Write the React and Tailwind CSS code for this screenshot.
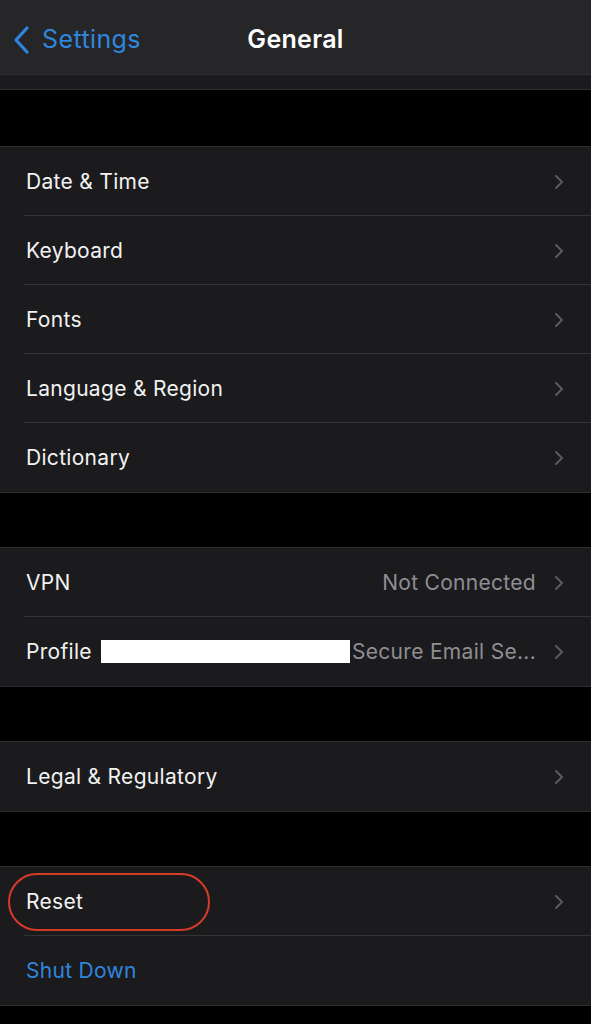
const FONT = { fontFamily: 'Inter, "Liberation Sans", sans-serif' };

const Chevron = () => (
  <svg width="10" height="16" viewBox="0 0 10 16" className="shrink-0">
    <path d="M2 2l6 6-6 6" fill="none" stroke="#5b5b5f" strokeWidth="2" strokeLinecap="round" strokeLinejoin="round" />
  </svg>
);

const Row = ({ label, value, last, blue, children }) => (
  <div className="relative h-[69px] flex items-center pl-[26px] pr-[27px]">
    <span className={`text-[21px] tracking-[0.3px] ${blue ? 'text-[#2f86de]' : 'text-[#f2f2f2]'}`}>{label}</span>
    {children}
    <div className="flex-1" />
    {value && <span className="text-[21px] tracking-[0.3px] text-[#8e8e93] mr-[18px]">{value}</span>}
    {!blue && <Chevron />}
    {!last && <div className="absolute left-[24px] right-0 bottom-0 h-px bg-[#343436]" />}
  </div>
);

const Group = ({ children }) => (
  <div className="bg-[#1b1b1d] border-y border-[#2e2e30]">{children}</div>
);

const Gap = ({ h = 'h-[54px]' }) => <div className={`${h} bg-black`} />;

export default function App() {
  return (
    <div className="w-[591px] h-[1024px] bg-black overflow-hidden" style={FONT}>
      {/* Nav bar */}
      <div className="h-[75px] bg-[#262628] border-b border-[#303032] flex items-center relative pt-[6px]">
        <div className="flex items-center pl-[12px] text-[#2f86de]">
          <svg width="20" height="32" viewBox="0 0 20 32">
            <path d="M15 4L4 16l11 12" fill="none" stroke="#2f86de" strokeWidth="3.2" strokeLinecap="round" strokeLinejoin="round" />
          </svg>
          <span className="text-[25px] tracking-[0.4px] ml-[10px]">Settings</span>
        </div>
        <span className="absolute left-0 right-0 text-center text-[25px] tracking-[0.3px] font-semibold text-white pointer-events-none">General</span>
      </div>
      <div className="h-[15px] bg-[#1b1b1d] border-b border-[#303032]" />
      <Gap h="h-[56px]" />
      <Group>
        <Row label="Date & Time" />
        <Row label="Keyboard" />
        <Row label="Fonts" />
        <Row label="Language & Region" />
        <Row label="Dictionary" last />
      </Group>
      <Gap />
      <Group>
        <Row label="VPN" value="Not Connected" />
        <Row label="Profile" value="Secure Email Se..." last>
          <div className="ml-[9px] w-[249px] h-[23px] bg-white" />
        </Row>
      </Group>
      <Gap />
      <Group>
        <Row label="Legal & Regulatory" last />
      </Group>
      <Gap />
      <Group>
        <div className="relative">
          <Row label="Reset" />
          <div className="absolute left-[8px] top-[6px] w-[202px] h-[58px] rounded-full border-2 border-[#d83a2a]" />
        </div>
        <Row label="Shut Down" blue last />
      </Group>
    </div>
  );
}
